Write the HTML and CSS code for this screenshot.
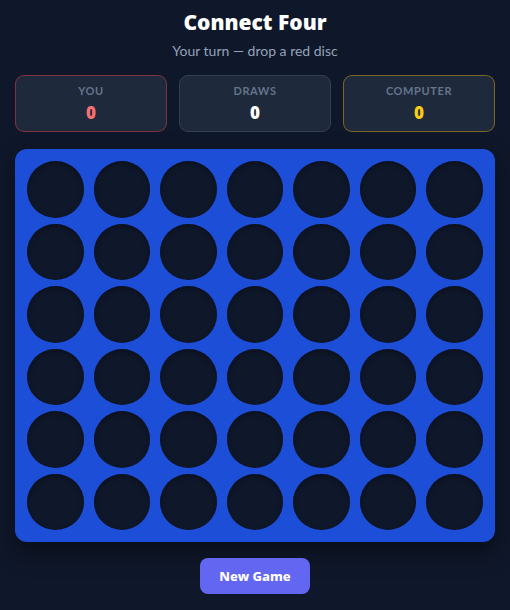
FILE: index.html
```html
<!DOCTYPE html>
<html>
<head>
<meta charset="utf-8">
<link rel="stylesheet" href="styles.css">
</head>
<body>
<div class="app">
  <h1 class="title">Connect Four</h1>
  <p class="status">Your turn — drop a red disc</p>
  <div class="scores">
    <div class="card card-you"><div class="label">You</div><div class="value v-you">0</div></div>
    <div class="card card-draw"><div class="label">Draws</div><div class="value v-draw">0</div></div>
    <div class="card card-cpu"><div class="label">Computer</div><div class="value v-cpu">0</div></div>
  </div>
  <div class="board">
    <div class="cell"></div><div class="cell"></div><div class="cell"></div><div class="cell"></div><div class="cell"></div><div class="cell"></div><div class="cell"></div>
    <div class="cell"></div><div class="cell"></div><div class="cell"></div><div class="cell"></div><div class="cell"></div><div class="cell"></div><div class="cell"></div>
    <div class="cell"></div><div class="cell"></div><div class="cell"></div><div class="cell"></div><div class="cell"></div><div class="cell"></div><div class="cell"></div>
    <div class="cell"></div><div class="cell"></div><div class="cell"></div><div class="cell"></div><div class="cell"></div><div class="cell"></div><div class="cell"></div>
    <div class="cell"></div><div class="cell"></div><div class="cell"></div><div class="cell"></div><div class="cell"></div><div class="cell"></div><div class="cell"></div>
    <div class="cell"></div><div class="cell"></div><div class="cell"></div><div class="cell"></div><div class="cell"></div><div class="cell"></div><div class="cell"></div>
  </div>
  <div class="actions"><button class="btn">New Game</button></div>
</div>
</body>
</html>
```
FILE: styles.css
```css
html, body {
  margin: 0;
  padding: 0;
  background: #0f172a;
  height: 100%;
}
body {
  font-family: Lato, "Noto Sans", sans-serif;
  color: #f1f5f9;
}
.app {
  padding: 8px 15px 0;
  display: flex;
  flex-direction: column;
}
.title {
  margin: 0;
  text-align: center;
  font-family: "Noto Sans", Lato, sans-serif;
  font-size: 21px;
  line-height: 28px;
  font-weight: 900;
  color: #ffffff;
}
.status {
  margin: 6px 0 0;
  text-align: center;
  font-size: 14px;
  line-height: 18px;
  color: #94a3b8;
}
.scores {
  margin-top: 15px;
  display: grid;
  grid-template-columns: repeat(3, 1fr);
  gap: 12px;
}
.card {
  background: #1e293b;
  border: 1px solid #334155;
  border-radius: 9px;
  padding: 8px 0 7px;
  text-align: center;
}
.card-you { border-color: rgba(239, 68, 68, 0.45); }
.card-cpu { border-color: rgba(234, 179, 8, 0.45); }
.label {
  font-size: 11px;
  line-height: 14px;
  font-weight: 700;
  text-transform: uppercase;
  letter-spacing: 0.6px;
  color: #64748b;
}
.value {
  margin-top: 4px;
  font-family: "Noto Sans", Lato, sans-serif;
  font-size: 17px;
  line-height: 22px;
  font-weight: 900;
}
.v-you { color: #f87171; }
.v-draw { color: #ffffff; }
.v-cpu { color: #facc15; }
.board {
  margin-top: 17px;
  background: #1d4ed8;
  border-radius: 12px;
  padding: 12px;
  display: grid;
  grid-template-columns: repeat(7, 1fr);
  column-gap: 10px;
  row-gap: 6px;
  box-shadow: 0 10px 25px rgba(0, 0, 0, 0.45);
}
.cell {
  aspect-ratio: 1;
  border-radius: 50%;
  background: #0f172a;
  box-shadow: inset 0 2px 5px rgba(0, 0, 0, 0.35);
}
.actions {
  margin-top: 16px;
  display: flex;
  justify-content: center;
}
.btn {
  width: 110px;
  height: 36px;
  border: none;
  border-radius: 8px;
  background: #6366f1;
  color: #ffffff;
  font-family: "Noto Sans", Lato, sans-serif;
  font-size: 13px;
  font-weight: 800;
}
```
